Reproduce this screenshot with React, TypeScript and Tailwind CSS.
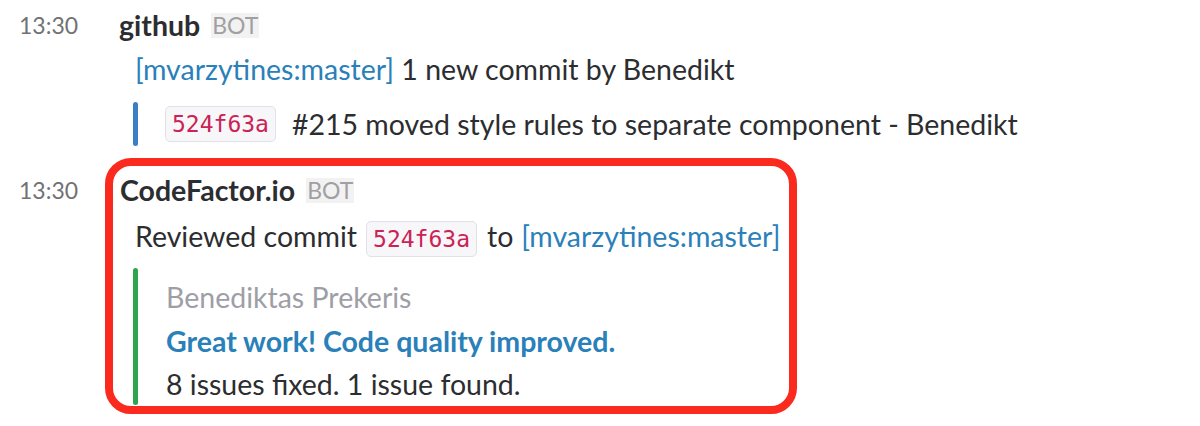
import React from 'react';

const Code: React.FC<{ children: React.ReactNode }> = ({ children }) => (
  <span className="inline-flex items-center h-[36px] px-[6px] rounded-[5px] border border-[#e1e1e8] bg-[#f7f7f9] text-[#cc2255] font-['DejaVu_Sans_Mono',monospace] text-[23px] leading-none">
    {children}
  </span>
);

const Bot: React.FC = () => (
  <span className="ml-[11px] inline-flex items-center h-[25px] px-[1px] bg-[#f2f2f2] text-[#a0a0a2] text-[23px] font-normal leading-none">
    BOT
  </span>
);

const App: React.FC = () => {
  return (
    <div className="w-[1200px] h-[426px] bg-white font-['Lato',sans-serif] text-[#2c2d30] pl-[19px] pt-[3px] overflow-hidden whitespace-nowrap">
      {/* github message */}
      <div className="flex">
        <div className="w-[100px] shrink-0 h-[44px] leading-[44px] text-[23px] text-[#717274]">13:30</div>
        <div>
          <div className="flex items-center h-[44px]">
            <span className="text-[28.5px] font-bold">github</span>
            <Bot />
          </div>
          <div className="h-[44px] leading-[44px] pl-[16px] text-[28.5px]">
            <span className="text-[#2a80b9]">[mvarzytines:master]</span> 1 new commit by Benedikt
          </div>
          <div className="flex items-stretch mt-[11px] pl-[14px] h-[44px]">
            <div className="w-[5px] rounded-full bg-[#3c7ec3]" />
            <div className="flex items-center pl-[27px] text-[28.5px]">
              <Code>524f63a</Code>
              <span className="ml-[16px]">#215 moved style rules to separate component - Benedikt</span>
            </div>
          </div>
        </div>
      </div>

      {/* CodeFactor message */}
      <div className="flex mt-[22px]">
        <div className="w-[100px] shrink-0 h-[44px] leading-[44px] text-[23px] text-[#717274]">13:30</div>
        <div className="relative w-[700px] shrink-0">
          {/* annotation frame */}
          <div className="absolute left-[-14px] top-[-10px] w-[692px] h-[256px] rounded-[26px] border-[8px] border-[#fb2a1f] pointer-events-none" />
          <div className="flex items-center h-[44px] pl-[1px]">
            <span className="text-[28.5px] font-bold">CodeFactor.io</span>
            <Bot />
          </div>
          <div className="flex items-center h-[48px] pl-[16px] text-[28.5px]">
            <span className="shrink-0">Reviewed commit</span>
            <span className="ml-[9px] shrink-0"><Code>524f63a</Code></span>
            <span className="ml-[10px] shrink-0">to</span>
            <span className="ml-[8px] shrink-0 text-[#2a80b9]">[mvarzytines:master]</span>
          </div>
          <div className="flex mt-[8px] pl-[14px]">
            <div className="w-[5px] rounded-full bg-[#2fa44f]" />
            <div className="pl-[28px] pt-[7px] text-[28.5px]">
              <div className="h-[44px] leading-[44px] text-[#9e9ea6]">Benediktas Prekeris</div>
              <div className="h-[44px] leading-[44px] font-bold text-[#2a80b9]">Great work! Code quality improved.</div>
              <div className="h-[42px] leading-[42px]">8 issues fixed. 1 issue found.</div>
            </div>
          </div>
        </div>
      </div>
    </div>
  );
};

export default App;
